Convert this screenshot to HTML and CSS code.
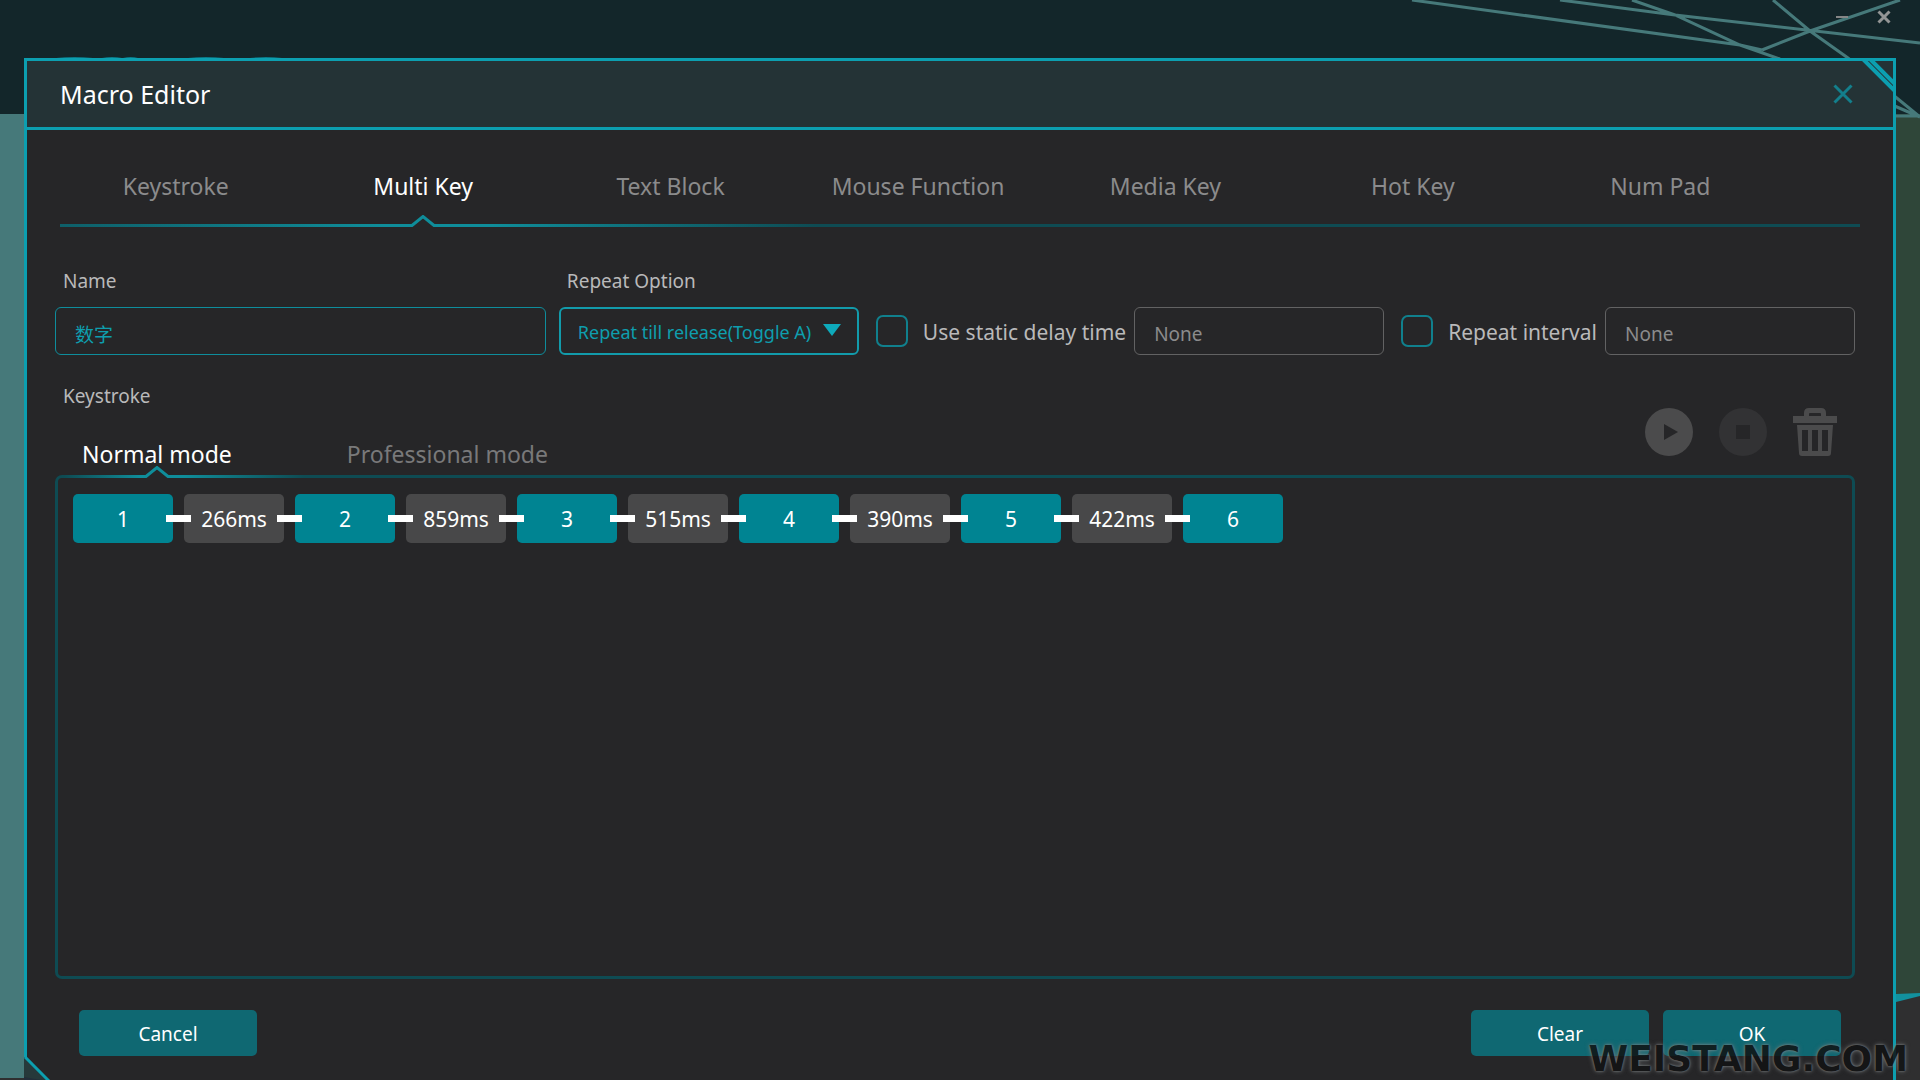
FILE: index.html
```html
<!DOCTYPE html>
<html lang="en">
<head>
<meta charset="utf-8">
<meta name="viewport" content="width=device-width, initial-scale=1">
<title>Macro Editor</title>
<link rel="stylesheet" href="styles.css">
</head>
<body>
<div class="app">
  <div class="backdrop" aria-hidden="true">
    <div class="backdrop-head"></div>
    <div class="backdrop-left"></div>
    <div class="backdrop-right">
      <svg class="wedge" width="24" height="9" viewBox="0 0 24 9"><path d="M0 1L24 0V3L0 9Z" fill="#12919e"/></svg>
    </div>
    <svg class="slivers" width="240" height="2" viewBox="0 0 240 2"><path d="M4 2Q22 0 41 2zM50 2Q60 0 70 2zM71 2Q79 0 86 2zM136 2Q154 0 172 2zM198 2Q214 0 230 2z" fill="#0c7a88"/></svg>
    <svg class="web" width="510" height="120" viewBox="0 0 510 120" fill="none" stroke="#46797a" stroke-width="3">
      <path d="M2 0L330 45L352 50M150 0L265 15L510 43M222 0L265 15L330 45L370 59M363 0L400 31L438 58L510 117M490 0L400 31L352 50M480 104L510 117M480 116H510"/>
    </svg>
  </div>
  <div class="window-controls">
    <button type="button" aria-label="Minimize"><svg width="14" height="14" viewBox="0 0 14 14"><path d="M1 7H13" stroke="#858686" stroke-width="2"/></svg></button>
    <button type="button" aria-label="Close window"><svg width="14" height="14" viewBox="0 0 14 14"><path d="M1.500 1.500L12.500 12.500M12.500 1.500L1.500 12.500" stroke="#939595" stroke-width="3"/></svg></button>
  </div>

  <main class="dialog">
    <svg class="corner-top" width="38" height="38" viewBox="0 0 38 38" fill="none"><path d="M4 0L38 34" stroke="#0c9fb0" stroke-width="4"/><path d="M11 0L38 27" stroke="#0c9fb0" stroke-width="4"/></svg>
    <header class="dialog-head">
      <h1>Macro Editor</h1>
      <button type="button" class="dialog-close" aria-label="Close"><svg width="20" height="20" viewBox="0 0 20 20"><path d="M1.500 1.500L18.500 18.500M18.500 1.500L1.500 18.500" stroke="#137f8c" stroke-width="3"/></svg></button>
    </header>

    <div class="dialog-body">
      <nav class="tabs">
        <button type="button">Keystroke</button>
        <button type="button" class="active">Multi Key<svg class="notch" width="26" height="12" viewBox="0 0 26 12"><path d="M2 12V9L13 1L24 9V12Z" fill="#262628"/><path d="M0 10.500H2L13 1.500L24 10.500H26" fill="none" stroke="#0f8d9a" stroke-width="3"/></svg></button>
        <button type="button">Text Block</button>
        <button type="button">Mouse Function</button>
        <button type="button">Media Key</button>
        <button type="button">Hot Key</button>
        <button type="button">Num Pad</button>
      </nav>
      <div class="rail"></div>

      <form class="options">
        <div class="field name">
          <label for="name">Name</label>
          <input id="name" class="box teal" type="text" value="数字">
        </div>
        <div class="field repeat">
          <label for="repeat">Repeat Option</label>
          <select id="repeat" class="box"><option>Repeat till release(Toggle A)</option></select>
          <svg class="caret" width="18" height="12" viewBox="0 0 18 12"><path d="M0 0H18L9 12Z" fill="#0eaabb"/></svg>
        </div>
        <div class="toggle">
          <input id="static" type="checkbox">
          <label for="static">Use static delay time</label>
          <input class="box value" type="text" value="None" aria-label="Static delay time">
        </div>
        <div class="toggle">
          <input id="interval" type="checkbox">
          <label for="interval">Repeat interval</label>
          <input class="box value" type="text" value="None" aria-label="Repeat interval time">
        </div>
      </form>

      <section class="editor">
        <div class="editor-head">
          <div class="modes-block">
            <h2>Keystroke</h2>
            <div class="modes">
              <button type="button" class="active">Normal mode<svg class="notch" width="26" height="12" viewBox="0 0 26 12"><path d="M2 12V9L13 1L24 9V12Z" fill="#262628"/><path d="M0 10.500H2L13 1.500L24 10.500H26" fill="none" stroke="#0f8d9a" stroke-width="3"/></svg></button>
              <button type="button">Professional mode</button>
            </div>
          </div>
          <div class="tools">
            <button type="button" aria-label="Play"><svg width="48" height="48" viewBox="0 0 48 48"><circle cx="24" cy="24" r="24" fill="#4b4b4c"/><path d="M19 16L33 24L19 32Z" fill="#262628"/></svg></button>
            <button type="button" aria-label="Stop"><svg width="48" height="48" viewBox="0 0 48 48"><circle cx="24" cy="24" r="24" fill="#323234"/><rect x="17" y="17" width="14" height="14" fill="#262628"/></svg></button>
            <button type="button" aria-label="Delete"><svg width="44" height="48" viewBox="0 0 44 48"><path fill="#4b4b4c" fill-rule="evenodd" d="M11 8V5Q11 0 16 0H28Q33 0 33 5V8H44V15H0V8ZM16 8H28V6Q28 5 27 5H17Q16 5 16 6ZM4 17H40L38 45Q38 48 35 48H9Q6 48 6 45ZM9 22V43H15V22ZM19 22V43H25V22ZM29 22V43H35V22Z"/></svg></button>
          </div>
        </div>
        <ol class="sequence">
          <li class="key">1</li>
          <li>266ms</li>
          <li class="key">2</li>
          <li>859ms</li>
          <li class="key">3</li>
          <li>515ms</li>
          <li class="key">4</li>
          <li>390ms</li>
          <li class="key">5</li>
          <li>422ms</li>
          <li class="key">6</li>
        </ol>
      </section>

      <footer class="actions">
        <button type="button" class="cancel">Cancel</button>
        <button type="button">Clear</button>
        <button type="button">OK</button>
      </footer>
    </div>
  </main>
  <svg class="corner-bottom" width="26" height="24" viewBox="0 0 26 24" aria-hidden="true"><path d="M0 0V24H26Z" fill="#26393b"/><path d="M0 20V24H23Z" fill="#232e3a"/><path d="M1 0L25 24" stroke="#0c9fb0" stroke-width="3"/></svg>
  <div class="watermark">WEISTANG.COM</div>
</div>
</body>
</html>
```
FILE: styles.css
```css
:root {
  --bg: #262628;
  --line: #0c9fb0;
  --dim: #0e4b53;
}

* { box-sizing: border-box; }

body {
  margin: 0;
  background: #2f2f30;
  color: #b9b9ba;
  font-family: "Noto Sans", "Noto Sans CJK SC", sans-serif;
}

button, input, select { font: inherit; color: inherit; }
button { padding: 0; border: 0; background: none; cursor: pointer; }
svg { display: block; }
h1, h2, ol { margin: 0; padding: 0; font-weight: 400; }

.app {
  position: relative;
  display: flex;
  flex-direction: column;
  min-height: 100vh;
  padding: 58px 24px 0;
  overflow: hidden;
}

/* Main window behind the dialog */
.backdrop { position: absolute; inset: 0; }
.backdrop-head { height: 114px; background: #13262a; }
.backdrop-left {
  position: absolute;
  top: 114px;
  bottom: 2px;
  left: 0;
  width: 24px;
  background: #46797a;
}
.backdrop-right {
  position: absolute;
  top: 114px;
  bottom: 86px;
  right: 0;
  width: 24px;
  background: #2f4639;
}
.wedge { position: absolute; bottom: -8px; left: 0; }
.web { position: absolute; top: 0; right: 0; }
.slivers { position: absolute; top: 56px; left: 52px; }

.window-controls {
  position: absolute;
  top: 10px;
  right: 29px;
  display: flex;
  gap: 28px;
}

/* Dialog */
.dialog {
  position: relative;
  flex: 1;
  display: flex;
  flex-direction: column;
  background: var(--bg);
  border: 3px solid var(--line);
  border-bottom: 0;
}
.corner-top { position: absolute; top: -3px; right: -3px; }
.corner-bottom { position: absolute; left: 24px; bottom: -1px; }

.dialog-head {
  display: flex;
  align-items: center;
  justify-content: space-between;
  height: 69px;
  padding: 0 40px 0 33px;
  background: #243336;
  border-bottom: 3px solid var(--line);
}
.dialog-head h1 { color: #fff; font-size: 25px; line-height: 34px; }

.dialog-body {
  flex: 1;
  display: flex;
  flex-direction: column;
  padding: 0 38px 24px 28px;
}

.tabs {
  display: grid;
  grid-template-columns: repeat(7, 1fr);
  margin: 0 71px 0 -3px;
}
.tabs button {
  position: relative;
  padding: 39px 0 21px;
  color: #8b8b8c;
  font-size: 23px;
  line-height: 34px;
}
.tabs .active, .modes .active { color: #fff; }
.notch { position: absolute; left: calc(50% - 13px); }
.tabs .notch { bottom: -3px; }

.rail {
  height: 3px;
  margin: 0 -5px 0 5px;
  background: linear-gradient(90deg, #0e5f69, #0f8d9a 18%, #0f8d9a 24%, var(--dim) 42%);
}

.options {
  display: flex;
  align-items: flex-end;
  margin-top: 40px;
}
.field {
  position: relative;
  display: flex;
  flex-direction: column;
  gap: 12px;
}
.field label, .editor h2 {
  padding-left: 8px;
  font-size: 19px;
  line-height: 28px;
}
.name { flex: 1; margin-right: 13px; }
.repeat { width: 300px; }

.box {
  width: 100%;
  height: 48px;
  padding: 6px 19px 0;
  background: transparent;
  border: 1px solid #626263;
  border-radius: 6px;
  color: #8b8b8c;
  font-size: 19px;
  outline: 0;
}
.teal { border-color: #0e8d9c; color: #0e9eae; }
select.box {
  appearance: none;
  padding: 2px 17px 0;
  border: 2px solid #129bab;
  color: #0e9eae;
  font-size: 18px;
}
.caret { position: absolute; right: 18px; bottom: 19px; pointer-events: none; }

.toggle {
  display: flex;
  align-items: center;
  height: 48px;
  margin-left: 17px;
}
.toggle label {
  margin: 0 8px 0 15px;
  padding-top: 2px;
  font-size: 21px;
  line-height: 30px;
  white-space: nowrap;
}
.toggle input[type="checkbox"] {
  appearance: none;
  width: 32px;
  height: 32px;
  margin: 0;
  border: 2px solid #10808d;
  border-radius: 7px;
}
.value { width: 250px; }

.editor {
  flex: 1;
  display: flex;
  flex-direction: column;
  margin-top: 27px;
}
.editor-head { display: flex; justify-content: space-between; }
.modes { display: flex; gap: 115px; padding-left: 27px; }
.modes button {
  position: relative;
  padding: 27px 0 4px;
  color: #79797a;
  font-size: 23px;
  line-height: 34px;
}
.modes .notch { bottom: -3px; z-index: 1; }
.tools {
  display: flex;
  align-items: flex-start;
  gap: 26px;
  padding: 26px 18px 0 0;
}

.sequence {
  position: relative;
  flex: 1;
  display: flex;
  flex-wrap: wrap;
  align-content: flex-start;
  gap: 11px;
  padding: 16px 15px;
  border: 3px solid var(--dim);
  border-radius: 7px;
  list-style: none;
}
.sequence::before {
  content: "";
  position: absolute;
  top: -3px;
  left: 6px;
  width: 240px;
  height: 3px;
  background: linear-gradient(90deg, var(--dim), #0f8d9a 32%, #0f8d9a 50%, var(--dim));
}
.sequence li {
  position: relative;
  width: 100px;
  height: 49px;
  background: #484849;
  border-radius: 5px;
  color: #fff;
  font-size: 21px;
  line-height: 51px;
  text-align: center;
}
.sequence .key { background: #008492; }
.sequence li:not(:last-child)::after {
  content: "";
  position: absolute;
  z-index: 1;
  top: 21px;
  right: -18px;
  width: 25px;
  height: 7px;
  background: #fff;
}

.actions {
  display: flex;
  gap: 14px;
  margin-top: 31px;
  padding: 0 14px 0 24px;
}
.actions button {
  width: 178px;
  height: 46px;
  padding-top: 2px;
  background: #0f6872;
  border-radius: 5px;
  color: #fff;
  font-size: 19px;
}
.actions .cancel { margin-right: auto; }

.watermark {
  position: absolute;
  right: 12px;
  bottom: 9px;
  color: #111314;
  font: 700 36px/24px "DejaVu Sans", sans-serif;
  text-shadow: 0 0 2px #8f9394, 0 0 5px #777b7c;
  opacity: .85;
  pointer-events: none;
}
```
